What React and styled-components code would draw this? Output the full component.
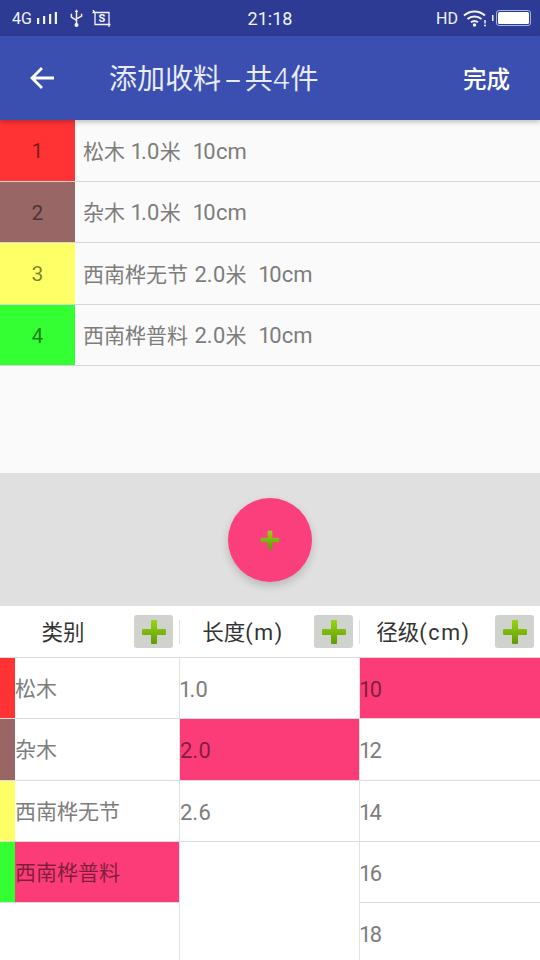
import React from 'react'
import styled, { createGlobalStyle } from 'styled-components'

const CJK = `Roboto, "Noto Sans CJK SC", sans-serif`

const GlobalStyle = createGlobalStyle`
  html, body { margin: 0; padding: 0; background: #fff; }
  * { box-sizing: border-box; }
  body { font-family: ${CJK}; }
`

const Page = styled.div`
  width: 540px;
  height: 960px;
  display: flex;
  flex-direction: column;
  overflow: hidden;
`

const StatusBar = styled.div`
  height: 36px;
  flex: none;
  background: #2d3b94;
  color: #f2f3fa;
  display: grid;
  grid-template-columns: 1fr auto 1fr;
  align-items: center;
  padding: 0 9px;
`

const StatusGroup = styled.div`
  display: flex;
  align-items: center;
  gap: ${p => p.$gap || 6}px;
  justify-content: ${p => (p.$end ? 'flex-end' : 'flex-start')};
  font-size: 16px;
  svg { display: block; }
`

const StatusLeft = styled(StatusGroup)`
  padding-left: 3px;
`

const Time = styled.span`
  font-size: 18px;
`

const AppBar = styled.header`
  height: 84px;
  flex: none;
  background: #3b4fb0;
  color: #fff;
  display: flex;
  align-items: center;
  padding: 0 30px 0 29px;
  box-shadow: 0 2px 5px rgba(0, 0, 0, 0.25);
  position: relative;
  z-index: 2;
`

const Title = styled.h1`
  margin: 0 0 0 54px;
  padding-bottom: 2px;
  flex: 1;
  font-size: 28px;
  font-weight: 400;
  color: #e8ebf8;
`

const TitleDash = styled.span`
  display: inline-block;
  margin: 0 8px;
  transform: scaleX(2);
`

const TitleCount = styled.span`
  font-size: 30px;
  font-weight: 300;
  margin-right: 1px;
`

const Done = styled.span`
  font-size: 23.5px;
  font-weight: 500;
`

const PickedList = styled.div`
  height: 353px;
  flex: none;
  background: #fafafa;
`

const PickedRow = styled.div`
  height: 61.5px;
  display: flex;
  border-bottom: 1px solid #d6d6d6;
`

const Badge = styled.div`
  width: 75px;
  flex: none;
  padding-top: 2px;
  background: ${p => p.$color};
  display: flex;
  align-items: center;
  justify-content: center;
  font-size: 21px;
  color: rgba(0, 0, 0, 0.5);
`

const PickedText = styled.div`
  padding: 0 0 1px 8px;
  display: flex;
  align-items: center;
  font-size: 21px;
  color: #7d7d7d;
  white-space: pre;
`

const Latin = styled.span`
  font-size: 22px;
  font-variant-numeric: proportional-nums;
  word-spacing: 1px;
`

const FabArea = styled.div`
  height: 133px;
  flex: none;
  background: #e0e0e0;
  display: flex;
  align-items: center;
  justify-content: center;
`

const Fab = styled.button`
  width: 84px;
  height: 84px;
  padding: 0;
  border: 0;
  border-radius: 50%;
  background: #fb3f7c;
  box-shadow: 0 4px 8px rgba(0, 0, 0, 0.18);
  display: flex;
  align-items: center;
  justify-content: center;
`

const Picker = styled.div`
  flex: 1;
  min-height: 0;
  display: grid;
  grid-template-columns: 180px 180px 180px;
  background: #fff;
`

const Column = styled.div`
  display: flex;
  flex-direction: column;
  border-right: ${p => (p.$last ? '0' : '1px solid #e2e2e2')};
  min-height: 0;
`

const ColumnHead = styled.div`
  height: 52px;
  flex: none;
  margin-right: ${p => (p.$last ? '0' : '-1px')};
  background: #fff;
  border-bottom: 1px solid #dcdcdc;
  display: flex;
  align-items: center;
`

const HeadLabel = styled.span`
  flex: 1;
  text-align: center;
  font-size: 21.5px;
  color: #333;
  padding: 0 8px 2px 0;
`

const HeadUnit = styled.span`
  letter-spacing: 1.6px;
`

const AddButton = styled.button`
  width: 39px;
  height: 33px;
  padding: 0;
  border: 0;
  border-radius: 3px;
  background: #cfd2cd;
  display: flex;
  align-items: center;
  justify-content: center;
`

const HeadDivider = styled.span`
  width: 1px;
  height: 24px;
  margin-left: ${p => (p.$hidden ? 5 : 6)}px;
  background: ${p => (p.$hidden ? 'transparent' : '#e2e2e2')};
`

const Cell = styled.div`
  height: 61.3px;
  flex: none;
  display: flex;
  border-bottom: 1px solid #dcdcdc;
  background: ${p => (p.$active ? '#fc3c78' : '#fff')};
  font-size: ${p => (p.$num ? 22 : 21)}px;
  font-variant-numeric: proportional-nums;
  color: ${p => (p.$active ? 'rgba(0, 0, 0, 0.5)' : '#7d7d7d')};
`

const Swatch = styled.span`
  width: 15px;
  flex: none;
  background: ${p => p.$color};
`

const CellText = styled.span`
  display: flex;
  align-items: center;
  padding: ${p => (p.$num ? '3px 0 0 0' : '0 0 2px 0')};
`

const PlusIcon = ({ size = 26 }) => (
  <svg width={size} height={size} viewBox="0 0 26 26">
    <defs>
      <linearGradient id="plusGreen" x1="0" y1="0" x2="0" y2="1">
        <stop offset="0" stopColor="#9ad414" />
        <stop offset="1" stopColor="#5f9a08" />
      </linearGradient>
    </defs>
    <path
      d="M11 1h4a1 1 0 0 1 1 1v8h8a1 1 0 0 1 1 1v4a1 1 0 0 1-1 1h-8v8a1 1 0 0 1-1 1h-4a1 1 0 0 1-1-1v-8H2a1 1 0 0 1-1-1v-4a1 1 0 0 1 1-1h8V2a1 1 0 0 1 1-1z"
      fill="url(#plusGreen)"
    />
  </svg>
)

const SignalIcon = () => (
  <svg width="20" height="13" viewBox="0 0 20 13" fill="currentColor">
    <rect x="0" y="6" width="2.200" height="6" />
    <rect x="6" y="4" width="2.200" height="8" />
    <rect x="12" y="2" width="2.200" height="10" />
    <rect x="17.800" y="0" width="2.200" height="12" />
  </svg>
)

const UsbIcon = () => (
  <svg width="13" height="19" viewBox="0 0 14 20" fill="none" stroke="currentColor" strokeWidth="1.600">
    <path d="M7 3v13M1.500 5v3.500L7 12M12.500 5v2.500L7 10.500" />
    <path d="M7 0l2 3H5z" fill="currentColor" stroke="none" />
    <circle cx="7" cy="17" r="2.200" fill="currentColor" stroke="none" />
  </svg>
)

const ScreenshotIcon = () => (
  <svg width="19" height="17" viewBox="0 0 19 17" fill="none" stroke="currentColor" strokeWidth="1.300">
    <path d="M1 0l2 2.500v12h15.500M.5 2.500h16.500V17" />
    <text x="10" y="12" fontSize="11" fontWeight="700" fontFamily="Roboto, sans-serif" fill="currentColor" stroke="none" textAnchor="middle">S</text>
  </svg>
)

const WifiIcon = () => (
  <svg width="24" height="18" viewBox="0 0 24 18" fill="none" stroke="currentColor" strokeWidth="2">
    <path d="M1 6.500C7 1 16 1 22 6.500M4.500 10C8.500 6.500 14.500 6.500 18.500 10M8 13.300c2-1.500 5-1.500 7 0" />
    <circle cx="11.500" cy="16" r="1.700" fill="currentColor" stroke="none" />
    <path d="M22 11v3.500" strokeWidth="1.500" />
    <circle cx="22" cy="16.500" r="1" fill="currentColor" stroke="none" />
  </svg>
)

const BatteryIcon = () => (
  <svg width="39" height="16" viewBox="0 0 39 16">
    <rect x="0" y="5" width="1.500" height="6" fill="#f2f3fa" />
    <rect x="4.500" y="0.500" width="34" height="15" rx="2.500" fill="none" stroke="#aab2e0" />
    <rect x="6" y="2" width="31" height="12" rx="1.500" fill="#fff" />
  </svg>
)

const BackIcon = () => (
  <svg width="26" height="26" viewBox="0 0 26 26" fill="none" stroke="#fff" strokeWidth="2.800">
    <path d="M25 13H3M13 3L3 13l10 10" />
  </svg>
)

const picked = [
  { color: '#ff3333', name: '松木', len: '1.0', size: '10cm' },
  { color: '#996666', name: '杂木', len: '1.0', size: '10cm' },
  { color: '#ffff66', name: '西南桦无节', len: '2.0', size: '10cm' },
  { color: '#33ff33', name: '西南桦普料', len: '2.0', size: '10cm' },
]

const kinds = [
  { color: '#ff3333', name: '松木' },
  { color: '#996666', name: '杂木' },
  { color: '#ffff66', name: '西南桦无节' },
  { color: '#33ff33', name: '西南桦普料', active: true },
]

const lengths = [{ name: '1.0' }, { name: '2.0', active: true }, { name: '2.6' }]
const sizes = [{ name: '10', active: true }, { name: '12' }, { name: '14' }, { name: '16' }, { name: '18' }]

const App = () => {
  return (
    <Page>
      <GlobalStyle />
      <StatusBar>
        <StatusLeft $gap={13}>
          <StatusGroup $gap={5}>4G<SignalIcon /></StatusGroup>
          <StatusGroup $gap={9}>
            <UsbIcon />
            <ScreenshotIcon />
          </StatusGroup>
        </StatusLeft>
        <Time>21:18</Time>
        <StatusGroup $end $gap={5}>
          HD
          <WifiIcon />
          <BatteryIcon />
        </StatusGroup>
      </StatusBar>

      <AppBar>
        <BackIcon />
        <Title>添加收料<TitleDash>-</TitleDash>共<TitleCount>4</TitleCount>件</Title>
        <Done>完成</Done>
      </AppBar>

      <PickedList>
        {picked.map((row, i) => (
          <PickedRow key={i}>
            <Badge $color={row.color}>{i + 1}</Badge>
            <PickedText>
              <span>{row.name}<Latin> {row.len}</Latin>米<Latin>  {row.size}</Latin></span>
            </PickedText>
          </PickedRow>
        ))}
      </PickedList>

      <FabArea>
        <Fab><PlusIcon size={20} /></Fab>
      </FabArea>

      <Picker>
        <Column>
          <ColumnHead>
            <HeadLabel>类别</HeadLabel>
            <AddButton><PlusIcon /></AddButton>
            <HeadDivider />
          </ColumnHead>
          {kinds.map(k => (
            <Cell key={k.name} $active={k.active}>
              <Swatch $color={k.color} />
              <CellText>{k.name}</CellText>
            </Cell>
          ))}
        </Column>
        <Column>
          <ColumnHead>
            <HeadLabel>长度<HeadUnit>(m)</HeadUnit></HeadLabel>
            <AddButton><PlusIcon /></AddButton>
            <HeadDivider />
          </ColumnHead>
          {lengths.map(l => (
            <Cell key={l.name} $num $active={l.active}>
              <CellText $num>{l.name}</CellText>
            </Cell>
          ))}
        </Column>
        <Column $last>
          <ColumnHead $last>
            <HeadLabel>径级<HeadUnit>(cm)</HeadUnit></HeadLabel>
            <AddButton><PlusIcon /></AddButton>
            <HeadDivider $hidden />
          </ColumnHead>
          {sizes.map(s => (
            <Cell key={s.name} $num $active={s.active}>
              <CellText $num>{s.name}</CellText>
            </Cell>
          ))}
        </Column>
      </Picker>
    </Page>
  )
}

export default App
